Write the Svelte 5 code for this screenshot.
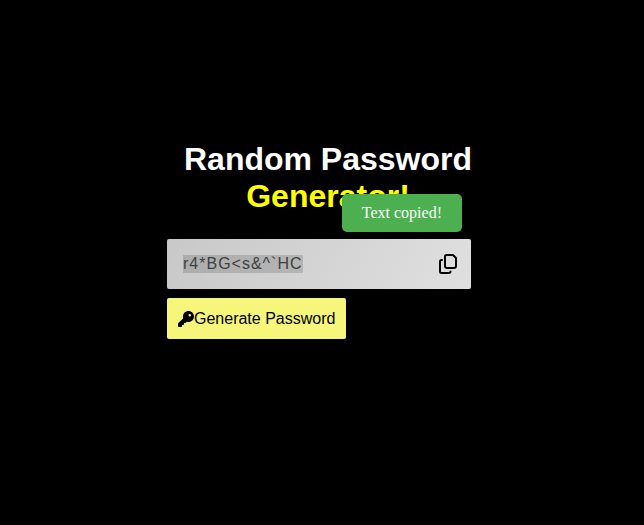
<script>
  import { onMount } from 'svelte';

  const chars = 'ABCDEFGHIJKLMNOPQRSTUVWXYZabcdefghijklmnopqrstuvwxyz0123456789!@#$%^&*()_+<>`';
  let password = $state('r4*BG<s&^`HC');
  let copied = $state(true);
  let field;

  function generate() {
    password = Array.from({ length: 12 }, () => chars[Math.floor(Math.random() * chars.length)]).join('');
    copied = false;
  }

  function copy() {
    field.focus();
    field.select();
    navigator.clipboard?.writeText(password);
    copied = true;
  }

  onMount(() => {
    field.focus();
    field.select();
  });
</script>

<main>
  <section class="container">
    <h1>Random Password <span>Generator!</span></h1>
    {#if copied}
      <div class="toast" role="status">Text copied!</div>
    {/if}
    <div class="display">
      <input bind:this={field} value={password} aria-label="Password" readonly spellcheck="false" />
      <button class="copy" type="button" aria-label="Copy password" onclick={copy}>
        <svg viewBox="0 0 20 22" width="20" height="22" fill="none" stroke="#080808" stroke-width="2" stroke-linejoin="round" stroke-linecap="round">
          <path d="M8.500 2h6.500l3 3V13a2 2 0 0 1-2 2H9a2 2 0 0 1-2-2V3.500a1.500 1.500 0 0 1 1.500-1.500z" />
          <path d="M4 7H3.500a1.500 1.500 0 0 0-1.500 1.500v10A1.500 1.500 0 0 0 3.500 20h7.500a1.500 1.500 0 0 0 1.500-1.500" />
        </svg>
      </button>
    </div>
    <button class="generate" type="button" onclick={generate}>
      <svg viewBox="0 0 512 512" width="16" height="16" fill="#000">
        <path d="M336 352c97.200 0 176-78.800 176-176S433.200 0 336 0S160 78.800 160 176c0 18.700 2.900 36.800 8.300 53.700L7 391c-4.500 4.500-7 10.600-7 17v80c0 13.300 10.700 24 24 24h80c13.300 0 24-10.700 24-24v-40h40c13.300 0 24-10.700 24-24v-40h40c6.400 0 12.500-2.500 17-7l33.300-33.300c16.900 5.400 35 8.300 53.700 8.300zM376 96a40 40 0 1 1 0 80 40 40 0 1 1 0-80z" />
      </svg>Generate Password
    </button>
  </section>
</main>

<style>
  :global(body) {
    margin: 0;
    background: #000;
  }

  main {
    display: flex;
    justify-content: center;
    box-sizing: border-box;
    min-height: 100vh;
    padding: 141px 0 0 12px;
  }

  .container {
    position: relative;
    width: 50vw;
    font-family: "Liberation Sans", Arial, sans-serif;
  }

  h1 {
    margin: 0 0 24px;
    color: #fff;
    font-size: 32px;
    line-height: 37px;
    text-align: center;
  }

  h1 span {
    color: #ff0;
  }

  .toast {
    position: absolute;
    top: 53px;
    right: 27px;
    padding: 10px 20px;
    border-radius: 5px;
    background: #4caf50;
    color: #fff;
    font: 16px/18px "Liberation Serif", "Times New Roman", serif;
  }

  .display {
    display: flex;
    align-items: center;
    box-sizing: border-box;
    height: 50px;
    margin: 0 18px 9px 0;
    padding: 0 13px 0 16px;
    border-radius: 2px;
    background: linear-gradient(120deg, #c8c8c8, #e0e0e0);
  }

  input {
    flex: 1;
    min-width: 0;
    padding: 0;
    border: 0;
    outline: 0;
    background: transparent;
    color: #404040;
    font: 16px/18px "Liberation Sans", Arial, sans-serif;
    letter-spacing: 1px;
  }

  input::selection {
    background: rgba(0, 0, 0, 0.14);
    color: #404040;
  }

  button {
    border: 0;
    cursor: pointer;
  }

  .copy {
    display: flex;
    padding: 0;
    background: none;
  }

  .generate {
    display: flex;
    align-items: center;
    height: 41px;
    padding: 0 11px;
    border-radius: 2px;
    background: #f6f67a;
    color: #000;
    font: 16px/18px "Liberation Sans", Arial, sans-serif;
  }
</style>
